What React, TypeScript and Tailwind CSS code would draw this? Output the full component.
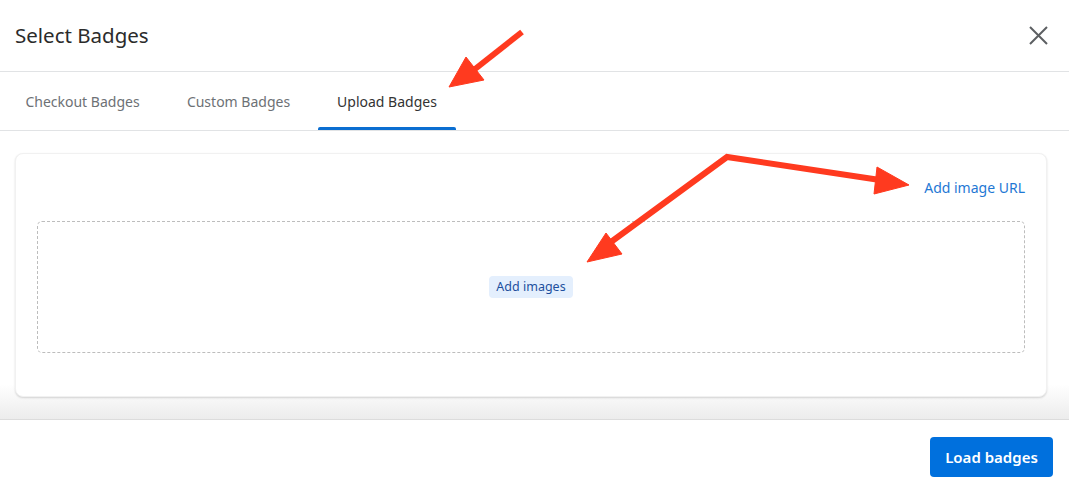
import React from "react";

const font = { fontFamily: '"Noto Sans", "Open Sans", sans-serif' };

function Tab({ label, active, w }: { label: string; active?: boolean; w: string }) {
  return (
    <div className={`relative flex h-full items-center justify-center ${w}`}>
      <span className={`text-[14px] ${active ? "text-[#333333]" : "text-[#6d7175]"}`}>{label}</span>
      {active && <div className="absolute bottom-0 left-0 right-0 h-[3px] rounded-t-[2px] bg-[#0a6ed1]" />}
    </div>
  );
}

// red annotation arrows drawn over the screenshot
function Arrows() {
  return (
    <svg className="pointer-events-none absolute left-0 top-0" width="1069" height="491">
      <g fill="#ff3a1f" stroke="#ff3a1f" strokeLinejoin="miter">
        <line x1="522" y1="32" x2="470" y2="73" strokeWidth="6" />
        <polygon points="449,87 466,57 484,80" />
        <polyline points="600,250 727,157 880,180" fill="none" strokeWidth="6" />
        <polygon points="587,262 606,233 622,254" />
        <polygon points="909,185 877,167 874,194" />
      </g>
    </svg>
  );
}

export default function App() {
  return (
    <div className="relative flex h-[491px] w-[1069px] flex-col overflow-hidden bg-white" style={font}>
      {/* header */}
      <div className="flex h-[72px] shrink-0 items-center justify-between border-b border-[#e1e3e5] pl-[15px] pr-[21px]">
        <h1 className="text-[20.5px] text-[#2b2b2b]">Select Badges</h1>
        <button className="text-[#5c5f62]">
          <svg width="19" height="19" viewBox="0 0 19 19" fill="none" stroke="currentColor" strokeWidth="2">
            <path d="M1 1L18 18M18 1L1 18" />
          </svg>
        </button>
      </div>

      {/* tabs */}
      <div className="flex h-[59px] shrink-0 items-stretch gap-[9px] border-b border-[#e1e3e5] pl-[6px]">
        <Tab label="Checkout Badges" w="w-[153px]" />
        <Tab label="Custom Badges" w="w-[141px]" />
        <Tab label="Upload Badges" w="w-[138px]" active />
      </div>

      {/* body */}
      <div className="flex-1 bg-gradient-to-b from-white from-[88%] to-[#ececec] pl-[15px] pr-[22px] pt-[22px]">
        <div className="h-[244px] rounded-[8px] border border-[#f1f1f1] bg-white px-[21px] pt-[21px] shadow-[0_1px_2px_rgba(0,0,0,0.15)]">
          <div className="flex h-[24px] items-center justify-end">
            <a className="text-[14px] text-[#1f78d4]">Add image URL</a>
          </div>
          <div className="mt-[22px] flex h-[132px] items-center justify-center rounded-[5px] border border-dashed border-[#bdbdbd]">
            <span className="rounded-[4px] bg-[#e4effd] px-[7px] py-[2px] text-[12.5px] text-[#1d4f9e]">Add images</span>
          </div>
        </div>
      </div>

      {/* footer */}
      <div className="flex h-[72px] shrink-0 items-start justify-end border-t border-[#dcdcdc] bg-white pr-[16px] pt-[17px]">
        <button className="h-[40px] w-[123px] rounded-[4px] bg-[#0070dd] text-[15px] font-semibold text-white">
          Load badges
        </button>
      </div>

      <Arrows />
    </div>
  );
}
